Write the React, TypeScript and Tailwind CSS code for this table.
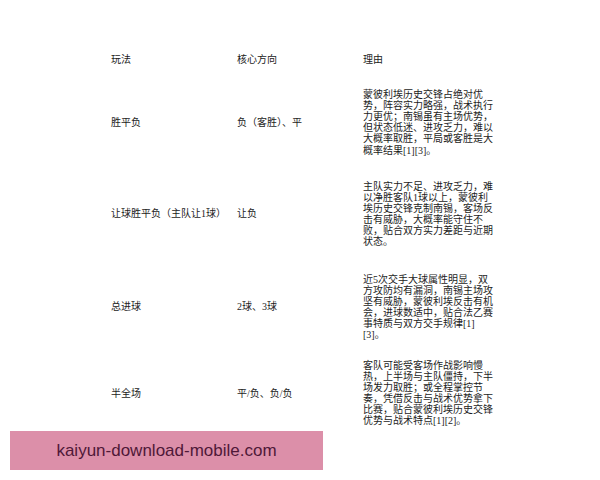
import React from "react";

const rows: { a: string; b: string; c: string[]; pad: string }[] = [
  {
    a: "胜平负",
    b: "负（客胜）、平",
    pad: "pt-[12px] pb-[12px]",
    c: [
      "蒙彼利埃历史交锋占绝对优",
      "势，阵容实力略强，战术执行",
      "力更优；南锡虽有主场优势，",
      "但状态低迷、进攻乏力，难以",
      "大概率取胜，平局或客胜是大",
      "概率结果[1][3]。",
    ],
  },
  {
    a: "让球胜平负（主队让1球）",
    b: "让负",
    pad: "pt-[13px] pb-[13px]",
    c: [
      "主队实力不足、进攻乏力，难",
      "以净胜客队1球以上，蒙彼利",
      "埃历史交锋克制南锡，客场反",
      "击有威胁，大概率能守住不",
      "败，贴合双方实力差距与近期",
      "状态。",
    ],
  },
  {
    a: "总进球",
    b: "2球、3球",
    pad: "pt-[13.5px] pb-[9.5px]",
    c: [
      "近5次交手大球属性明显，双",
      "方攻防均有漏洞，南锡主场攻",
      "坚有威胁，蒙彼利埃反击有机",
      "会，进球数适中，贴合法乙赛",
      "事特质与双方交手规律[1]",
      "[3]。",
    ],
  },
  {
    a: "半全场",
    b: "平/负、负/负",
    pad: "pt-[10px] pb-[12px]",
    c: [
      "客队可能受客场作战影响慢",
      "热，上半场与主队僵持，下半",
      "场发力取胜；或全程掌控节",
      "奏，凭借反击与战术优势拿下",
      "比赛，贴合蒙彼利埃历史交锋",
      "优势与战术特点[1][2]。",
    ],
  },
];

const font = {
  fontFamily: '"Liberation Serif", "Noto Sans CJK SC", serif',
};

export default function App() {
  return (
    <div className="relative w-[600px] h-[480px] bg-white overflow-hidden">
      <div
        className="flex flex-col pt-[42px] pl-[101px] text-[10px] leading-[11.1px] text-[#1c1c1c]"
        style={font}
      >
        <div className="grid grid-cols-[126px_126px_140px] py-[12px]">
          <div className="pl-[10px]">玩法</div>
          <div className="pl-[10px]">核心方向</div>
          <div className="pl-[10px]">理由</div>
        </div>
        {rows.map((r, i) => (
          <div
            key={i}
            className={`grid grid-cols-[126px_126px_140px] items-center ${r.pad}`}
          >
            <div className="pl-[10px] whitespace-nowrap">{r.a}</div>
            <div className="pl-[10px] whitespace-nowrap">{r.b}</div>
            <div className="pl-[10px] flex flex-col">
              {r.c.map((l, j) => (
                <div key={j} className="whitespace-nowrap">
                  {l}
                </div>
              ))}
            </div>
          </div>
        ))}
      </div>
      <div className="absolute left-[10px] top-[431px] w-[313px] h-[39px] bg-[#dc8fa9] flex items-center justify-center">
        <span
          className="text-[17px] text-[#4f1838]"
          style={{ fontFamily: '"Liberation Sans", Arial, sans-serif' }}
        >
          kaiyun-download-mobile.com
        </span>
      </div>
    </div>
  );
}
